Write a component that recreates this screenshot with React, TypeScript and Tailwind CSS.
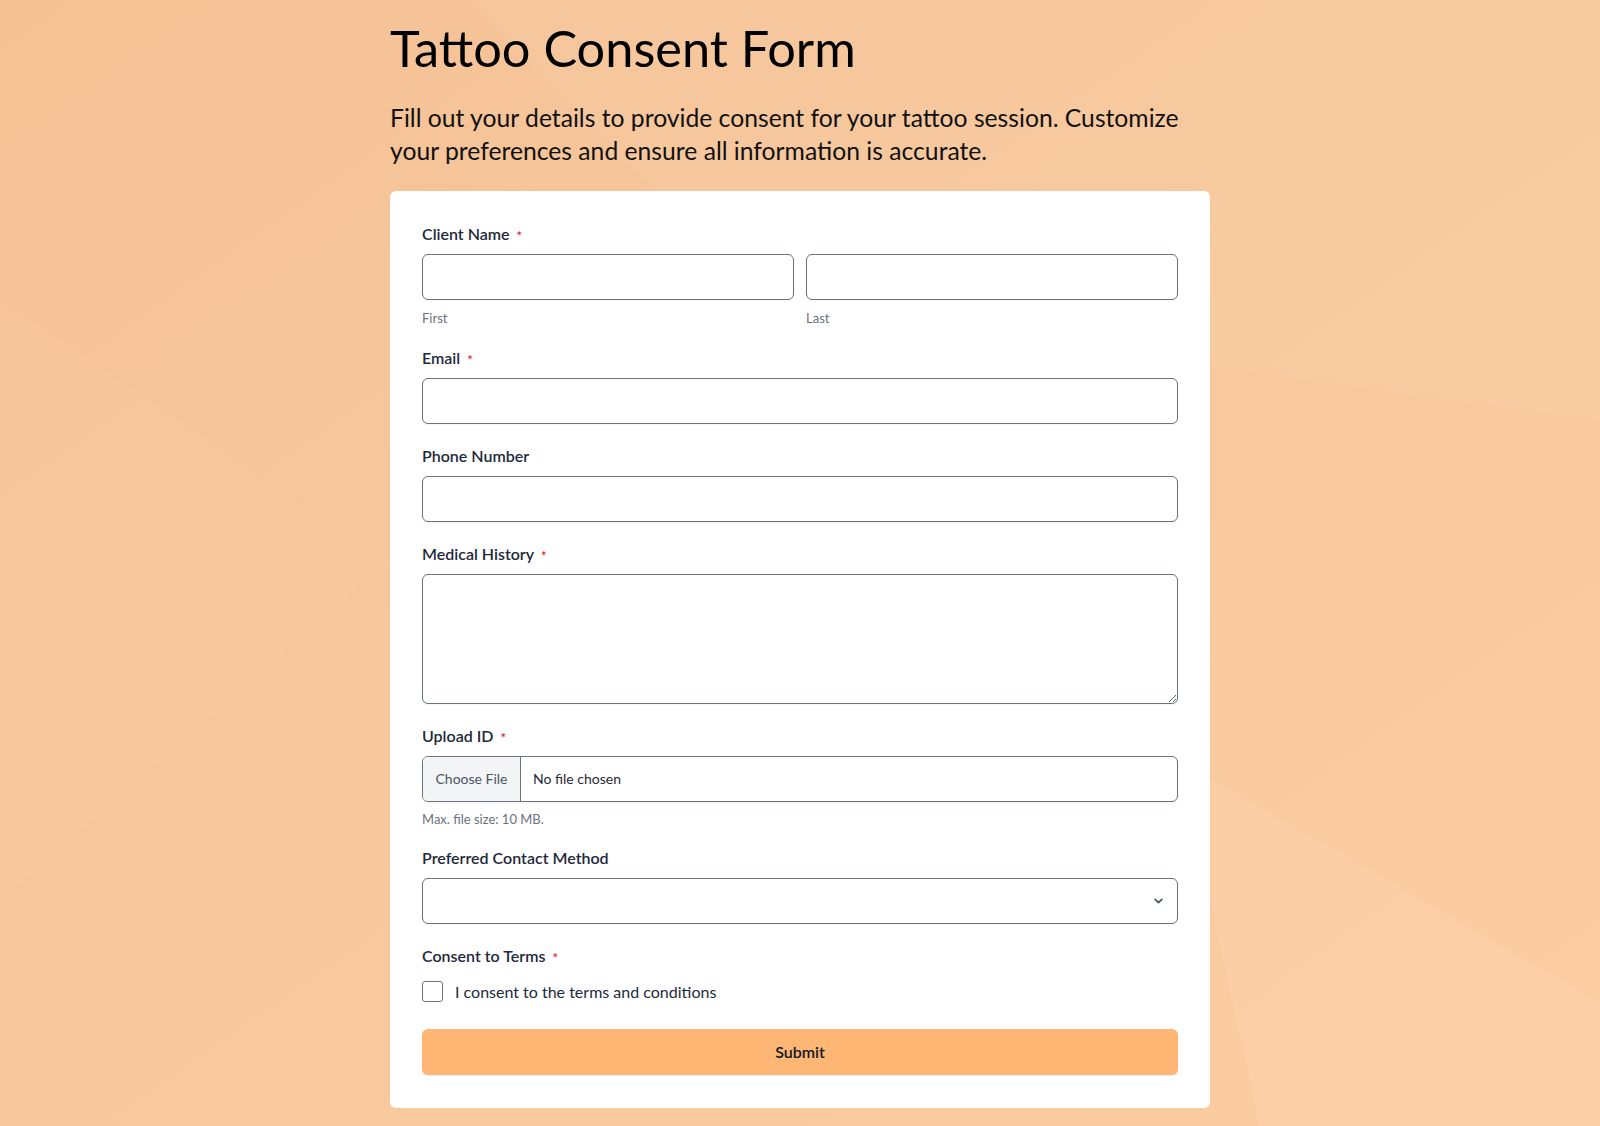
import React from "react";

const font = { fontFamily: "Lato, 'Noto Sans', sans-serif" };

function Label({ text, required }: { text: string; required?: boolean }) {
  return (
    <div className="flex h-5 items-center text-[16px] leading-5 font-semibold text-[#1e293b] mb-2.5">
      <span>{text}</span>
      {required && <span className="relative top-[2px] ml-[7px] text-[13px] leading-none text-[#dc2626]">*</span>}
    </div>
  );
}

const inputCls =
  "block w-full h-[46px] rounded-md border border-[#6b7280] bg-white shadow-[0_1px_2px_rgba(0,0,0,0.05)]";

export default function App() {
  return (
    <div
      className="relative min-h-screen w-full overflow-hidden bg-gradient-to-br from-[#f4c195] via-[#f8c89d] to-[#fdcda2]"
      style={font}
    >
      {/* faint background facets */}
      <svg className="absolute inset-0 h-full w-full" viewBox="0 0 1600 1126" preserveAspectRatio="none">
        <polygon points="470,0 1600,0 1600,420 760,300" fill="#ffffff" opacity="0.04" />
        <polygon points="1180,760 1600,1000 1600,1126 1260,1126" fill="#ffffff" opacity="0.07" />
        <polygon points="0,300 390,560 0,900" fill="#ffffff" opacity="0.03" />
      </svg>

      <div className="relative mx-auto w-[820px] pt-4 pb-5">
        <h1 className="text-[50.5px] leading-[64px] font-normal text-black">Tattoo Consent Form</h1>
        <p className="mt-[21px] text-[24.7px] leading-[33px] text-[#111]">
          Fill out your details to provide consent for your tattoo session. Customize your preferences and ensure
          all information is accurate.
        </p>

        <form className="mt-[24px] rounded-md bg-white px-8 pt-[33px] pb-[33px] flex flex-col gap-[22px]">
          <div>
            <Label text="Client Name" required />
            <div className="grid grid-cols-2 gap-3">
              <div>
                <input className={inputCls} />
                <div className="mt-2.5 text-[13px] leading-4 text-[#6b7280]">First</div>
              </div>
              <div>
                <input className={inputCls} />
                <div className="mt-2.5 text-[13px] leading-4 text-[#6b7280]">Last</div>
              </div>
            </div>
          </div>

          <div>
            <Label text="Email" required />
            <input className={inputCls} />
          </div>

          <div>
            <Label text="Phone Number" />
            <input className={inputCls} />
          </div>

          <div>
            <Label text="Medical History" required />
            <textarea className="block w-full h-[130px] rounded-md border border-[#6b7280] bg-white shadow-[0_1px_2px_rgba(0,0,0,0.05)]" />
          </div>

          <div>
            <Label text="Upload ID" required />
            <div className="flex h-[46px] w-full overflow-hidden rounded-md border border-[#6b7280] bg-white shadow-[0_1px_2px_rgba(0,0,0,0.05)]">
              <div className="flex w-[98px] items-center justify-center border-r border-[#6b7280] bg-[#f3f4f6] text-sm text-[#4b5563]">
                Choose File
              </div>
              <div className="flex items-center pl-3 text-sm text-[#1f2937]">No file chosen</div>
            </div>
            <div className="mt-[9px] text-[13px] leading-4 text-[#6b7280]">Max. file size: 10 MB.</div>
          </div>

          <div className="-mt-px">
            <Label text="Preferred Contact Method" />
            <div className={inputCls + " relative"}>
              <svg
                className="absolute right-[10px] top-1/2 -translate-y-1/2"
                width="17"
                height="17"
                viewBox="0 0 20 20"
                fill="none"
              >
                <path d="M6 8l4 4 4-4" stroke="#4b5563" strokeWidth="2" strokeLinecap="round" strokeLinejoin="round" />
              </svg>
            </div>
          </div>

          <div>
            <Label text="Consent to Terms" required />
            <label className="mt-[15px] flex items-center gap-3 text-[16px] leading-5 text-[#1e293b]">
              <span className="block h-[21px] w-[21px] rounded-[3px] border border-[#6b7280] bg-white" />
              I consent to the terms and conditions
            </label>
          </div>

          <button
            type="button"
            className="mt-[5px] h-[46px] w-full rounded-md bg-[#fdb674] text-[16px] font-semibold text-[#111827] shadow-[0_1px_2px_rgba(0,0,0,0.08)]"
          >
            Submit
          </button>
        </form>
      </div>
    </div>
  );
}
